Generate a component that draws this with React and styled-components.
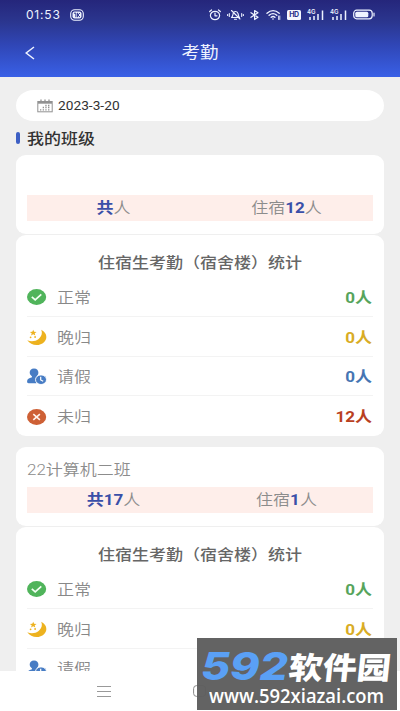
import React from "react";
import styled, { createGlobalStyle } from "styled-components";

const Global = createGlobalStyle`
  * { box-sizing: border-box; }
  body { margin: 0; background: #efefef; font-family: Roboto, "Noto Sans CJK SC", sans-serif; }
`;

const Screen = styled.div`
  position: relative;
  width: 400px;
  height: 711px;
  overflow: hidden;
  display: flex;
  flex-direction: column;
  background: #efefef;
`;

const Header = styled.header`
  flex: none;
  height: 77px;
  color: #eef3ff;
  background: linear-gradient(#25267b 0, #2b368f 22px, #3047b8 46px, #3960e6 77px);
`;

const StatusBar = styled.div`
  height: 29px;
  padding: 0 25px 0 26px;
  display: flex;
  align-items: center;
  justify-content: space-between;
`;

const StatusGroup = styled.div`
  display: flex;
  align-items: center;
  gap: ${(p) => p.$gap || 0}px;
`;

const Clock = styled.span`
  font: 400 12px/14px Inter, sans-serif;
  letter-spacing: 0.8px;
  width: 35px;
  white-space: nowrap;
`;

const NavBar = styled.div`
  height: 48px;
  display: grid;
  grid-template-columns: 60px 1fr 60px;
  align-items: center;
`;

const Back = styled.button`
  border: 0;
  padding: 0 0 0 25px;
  background: none;
  color: inherit;
  display: flex;
`;

/* Glyphs are wider than tall throughout the interface. */
const Squat = styled.span`
  display: inline-block;
  white-space: nowrap;
  transform: scaleY(0.87);
`;

const PageTitle = styled(Squat)`
  text-align: center;
  font-size: 18.5px;
  line-height: 24px;
`;

const Content = styled.main`
  flex: 1;
  min-height: 0;
  overflow: hidden;
  padding: 13px 16px 0;
`;

const DateField = styled.div`
  height: 31px;
  padding: 0 21px;
  border-radius: 18px / 16px;
  background: #fff;
  display: flex;
  align-items: center;
  gap: 5px;
`;

const DateText = styled.span`
  font-size: 12.6px;
  line-height: 16px;
  color: #333;
  display: inline-block;
  transform: scaleX(1.09);
  transform-origin: left;
`;

const SectionHead = styled.div`
  height: 34px;
  padding-bottom: 1px;
  display: flex;
  align-items: center;
  gap: 7px;
  color: #333;
  font-size: 17px;
  font-weight: 500;

  &::before {
    content: "";
    width: 4px;
    height: 12px;
    border-radius: 2px;
    background: #3d5fc4;
  }
`;

const Card = styled.section`
  border-radius: 10px / 9px;
  background: #fff;
  padding: 0 11px;
`;

const ClassCard = styled(Card)`
  height: 79px;
  margin-bottom: 1px;
  display: flex;
  flex-direction: column;
`;

const ClassName = styled.div`
  height: 40px;
  padding-top: 3px;
  display: flex;
  align-items: center;
  font-size: 17px;
  color: #8c8c8c;
  font-weight: 350;
`;

const Totals = styled.div`
  height: 26px;
  display: grid;
  grid-template-columns: 1fr 1fr;
  align-items: center;
  justify-items: center;
  background: #feeeea;
  color: #8c8c8c;
  font-size: 17px;
  line-height: 26px;
  font-weight: 350;

  b {
    color: #3a4fa8;
    font-weight: 700;
  }
`;

const StatCard = styled(Card)`
  height: 201px;
  margin-bottom: ${(p) => p.$last ? 0 : 11}px;
  padding-top: 14px;
`;

const StatTitle = styled.div`
  height: 28px;
  padding-bottom: 3px;
  display: flex;
  justify-content: center;
  align-items: center;
  font-size: 17px;
  font-weight: 500;
  color: #666;
`;

const Row = styled.div`
  height: 39.8px;
  display: grid;
  grid-template-columns: 30px 1fr auto;
  align-items: center;
  font-size: 17px;
  color: #888;
  font-weight: 350;
  border-bottom: 1px solid ${(p) => p.$last ? "transparent" : "#f3f3f3"};

  svg { display: block; margin-top: 2px; }
`;

const Count = styled(Squat)`
  color: ${(p) => p.$color};
  font-weight: 700;
  padding-right: 1px;
`;

const SystemBar = styled.footer`
  flex: none;
  height: 40px;
  padding-left: 97px;
  display: flex;
  align-items: center;
  gap: 81px;
  background: #fff;
`;

const Watermark = styled.div`
  position: absolute;
  left: 197px;
  top: 638px;
  width: 200px;
  height: 72px;
  background: rgba(94, 94, 94, 0.97);
  color: #fff;
  overflow: hidden;
`;

const Brand = styled.div`
  height: 47px;
  padding: 9px 0 0 4px;
  display: flex;
  align-items: center;
`;

const BrandNumber = styled.span`
  width: 87px;
  font: italic 800 36px/36px Inter, sans-serif;
  color: #5aa0f5;
  transform: scale(1.24, 1.06);
  transform-origin: left;
`;

const BrandName = styled.span`
  margin-left: 1px;
  white-space: nowrap;
  font: 900 34px/36px "Noto Sans CJK SC", sans-serif;
  transform: skewX(-6deg) scaleY(0.9);
`;

const Site = styled.div`
  width: 176px;
  margin-left: 12px;
  font: 600 20px/22px "Open Sans", sans-serif;
  white-space: nowrap;
  transform: scaleX(0.92);
  transform-origin: left;
`;

const stroke = { fill: "none", stroke: "currentColor", strokeWidth: 1.2, strokeLinecap: "round", strokeLinejoin: "round" };

const RecordIcon = () => (
  <svg width="14" height="12" viewBox="0 0 14 12">
    <rect x=".7" y=".8" width="12.6" height="10.4" rx="4" {...stroke} strokeWidth="1.1" />
    <rect x="2.5" y="2.5" width="9" height="7" rx="2" fill="currentColor" />
    <path d="M4.3 4.2h1.6v3.6M9.7 4.2 7.9 6l1.8 1.8M7.6 4.2v3.6" {...stroke} stroke="#29318a" strokeWidth="1" />
  </svg>
);

const AlarmIcon = () => (
  <svg width="12" height="12" viewBox="0 0 12 12" {...stroke}>
    <ellipse cx="6" cy="6.5" rx="4.6" ry="4.2" />
    <path d="M.7 2.5 2.5 1M11.3 2.5 9.5 1M6 4v2.8h2" />
  </svg>
);

const MuteIcon = () => (
  <svg width="17" height="12" viewBox="0 0 17 12" {...stroke} strokeWidth="1.1">
    <path d="M4.5 8.5h8c-1.2-1-.8-2-1.4-3.7C10.4 1.7 7 1.8 6.2 4.3 5.7 6 6 7.4 4.5 8.5zM7.5 10.2h2M4.5 1.5l8.5 8.5M2.3 4.5v3M.6 5.5v1M14.7 4.5v3M16.4 5.5v1" />
  </svg>
);

const BluetoothIcon = () => (
  <svg width="10" height="12" viewBox="0 0 10 12" {...stroke}>
    <path d="m1 3.7 7 4.6-3.4 2.2v-9L8 3.7 1 8.3" />
  </svg>
);

const WifiIcon = () => (
  <svg width="15" height="12" viewBox="0 0 15 12" {...stroke}>
    <path d="M1 4.2c3.7-3.2 8.5-3.2 12.2 0M3.1 6.3c2.4-2 5.5-2 7.7 0M5.2 8.3c1.2-.9 2.6-.9 3.7 0" strokeWidth="1.4" />
    <circle cx="7" cy="10" r=".8" fill="currentColor" stroke="none" />
    <path d="M12.6 7v3.5M13.8 7v3.5" strokeWidth=".9" />
  </svg>
);

const HdBadge = styled.span`
  width: 14px;
  height: 10px;
  border-radius: 1.5px;
  background: #f5f7ff;
  color: #29318a;
  display: flex;
  align-items: center;
  justify-content: center;
  gap: 0.5px;
  font: 700 7px/10px Inter, sans-serif;
  letter-spacing: -0.5px;
`;

const Signal = styled.span`
  position: relative;
  width: 17px;
  height: 12px;

  svg { display: block; }
`;

const SignalLabel = styled.span`
  position: absolute;
  left: 0;
  top: 0;
  font: 600 6px/6px Inter, sans-serif;
`;

const CellSignal = () => (
  <Signal>
    <SignalLabel>4G</SignalLabel>
    <svg width="17" height="12" viewBox="0 0 17 12" stroke="currentColor" strokeWidth="1.5">
      <path d="M3 8v3M7 7v4M11 5v6M15.5 1.5V11" />
    </svg>
  </Signal>
);

const BatteryIcon = () => (
  <svg width="22" height="11" viewBox="0 0 22 11">
    <rect x=".7" y="1.2" width="18.5" height="8.6" rx="3" {...stroke} />
    <rect x="2.3" y="2.8" width="13" height="5.4" rx="1.5" fill="currentColor" />
    <path d="M21 4v3" {...stroke} />
  </svg>
);

const CalendarIcon = () => (
  <svg width="16" height="14" viewBox="0 0 16 14" fill="none" stroke="#929292">
    <rect x=".8" y="2.5" width="14.4" height="10.3" strokeWidth="1" />
    <path d="M1 3.7h14" strokeWidth="2" />
    <path d="M4 .6V4M8 .6V4M12 .6V4" strokeWidth="1.3" />
    <path d="M3 10.8h1.3M5.7 10.8H7M8.3 10.8h1.3M11 10.8h1.4M5.7 8.5H7M8.3 8.5h1.3M11 8.5h1.4M8.3 6.5h1.3M11 6.5h1.4" strokeWidth="1.3" />
  </svg>
);

const CheckIcon = () => (
  <svg width="20" height="16" viewBox="0 0 20 16">
    <ellipse cx="9.6" cy="8" rx="9.6" ry="7.9" fill="#50b45b" />
    <path d="m4.8 7.8 3.4 3.1 6.1-5.5" fill="none" stroke="#f4fff4" strokeWidth="1.7" />
  </svg>
);

const MoonIcon = () => (
  <svg width="20" height="17" viewBox="0 0 20 17" fill="#edb21f">
    <path d="M14.2.8C20 3.6 20.8 9.4 17 13.3 12.5 17.6 3.9 17 .3 11.3c4 1.5 8.4 1 11.3-1.4 3.1-2.6 4-5.8 2.6-9.1z" />
    <path d="m6.2.7.9 2 2.5.2-1.9 1.4.6 2.2-2.1-1.2-2.1 1.2.6-2.2-1.9-1.4 2.5-.2z" />
    <circle cx="3.6" cy="8.3" r=".9" /><circle cx="8.1" cy="8" r=".9" />
  </svg>
);

const LeaveIcon = () => (
  <svg width="20" height="17" viewBox="0 0 20 17">
    <path d="M7 .5c3 0 4.5 2.1 4.4 4.3-.1 1.7-1 2.8-2 3.7v1.2l2 .8-2 4.8H1.6C.5 15.3 0 14.5.1 13.3c.1-2.2 1.8-3 4.9-4V8.4C3.7 7.5 2.7 6.3 2.7 4.6 2.7 2.3 4.2.5 7 .5z" fill="#477cc4" />
    <ellipse cx="14" cy="11.7" rx="5.5" ry="4.8" fill="#477cc4" stroke="#fff" strokeWidth=".9" />
    <path d="M13.7 8.8V12l2.5 1.3" fill="none" stroke="#fff" strokeWidth="1.2" />
  </svg>
);

const MissingIcon = () => (
  <svg width="20" height="16" viewBox="0 0 20 16">
    <ellipse cx="9.6" cy="8" rx="9.6" ry="7.9" fill="#ce6035" />
    <path d="m6.3 5.2 6.6 5.6m0-5.6-6.6 5.6" stroke="#fff3ed" strokeWidth="1.6" />
  </svg>
);

const kinds = [
  { label: "正常", color: "#57a45c", Icon: CheckIcon },
  { label: "晚归", color: "#d9ac25", Icon: MoonIcon },
  { label: "请假", color: "#4675b3", Icon: LeaveIcon },
  { label: "未归", color: "#b9401f", Icon: MissingIcon },
];

const classes = [
  { name: "", total: "", boarding: "12", counts: [0, 0, 0, 12] },
  { name: "22计算机二班", total: "17", boarding: "1", counts: [0, 0, 0, 1] },
];

const ClassBlock = ({ data, last }) => (
  <>
    <ClassCard>
      <ClassName><Squat>{data.name}</Squat></ClassName>
      <Totals>
        <Squat><b>共{data.total}</b>人</Squat>
        <Squat>住宿<b>{data.boarding}</b>人</Squat>
      </Totals>
    </ClassCard>
    <StatCard $last={last}>
      <StatTitle><Squat>住宿生考勤（宿舍楼）统计</Squat></StatTitle>
      {kinds.slice(0, last ? 3 : 4).map(({ label, color, Icon }, i) => (
        <Row key={label} $last={i === 3}>
          <Icon />
          <Squat>{label}</Squat>
          <Count $color={color}>{data.counts[i]}人</Count>
        </Row>
      ))}
    </StatCard>
  </>
);

export default function App() {
  return (
    <Screen>
      <Global />
      <Header>
        <StatusBar>
          <StatusGroup $gap={9}><Clock>01:53</Clock><RecordIcon /></StatusGroup>
          <StatusGroup $gap={6}>
            <AlarmIcon /><MuteIcon /><BluetoothIcon /><WifiIcon />
            <HdBadge>HD</HdBadge><CellSignal /><CellSignal /><BatteryIcon />
          </StatusGroup>
        </StatusBar>
        <NavBar>
          <Back aria-label="返回">
            <svg width="10" height="14" viewBox="0 0 10 14" fill="none" stroke="currentColor" strokeWidth="1.5">
              <path d="M9 1 1.2 7 9 13" />
            </svg>
          </Back>
          <PageTitle>考勤</PageTitle>
        </NavBar>
      </Header>
      <Content>
        <DateField><CalendarIcon /><DateText>2023-3-20</DateText></DateField>
        <SectionHead><Squat>我的班级</Squat></SectionHead>
        <ClassBlock data={classes[0]} />
        <ClassBlock data={classes[1]} last />
      </Content>
      <SystemBar>
        <svg width="14" height="13" viewBox="0 0 14 13" stroke="#999" strokeWidth="1.2">
          <path d="M0 1.5h14M0 6.5h14M0 11.5h14" />
        </svg>
        <svg width="14" height="12" viewBox="0 0 14 12">
          <rect x="1.6" y=".6" width="12" height="10.8" rx="3" fill="none" stroke="#888" />
        </svg>
      </SystemBar>
      <Watermark>
        <Brand><BrandNumber>592</BrandNumber><BrandName>软件园</BrandName></Brand>
        <Site>www.592xiazai.com</Site>
      </Watermark>
    </Screen>
  );
}
